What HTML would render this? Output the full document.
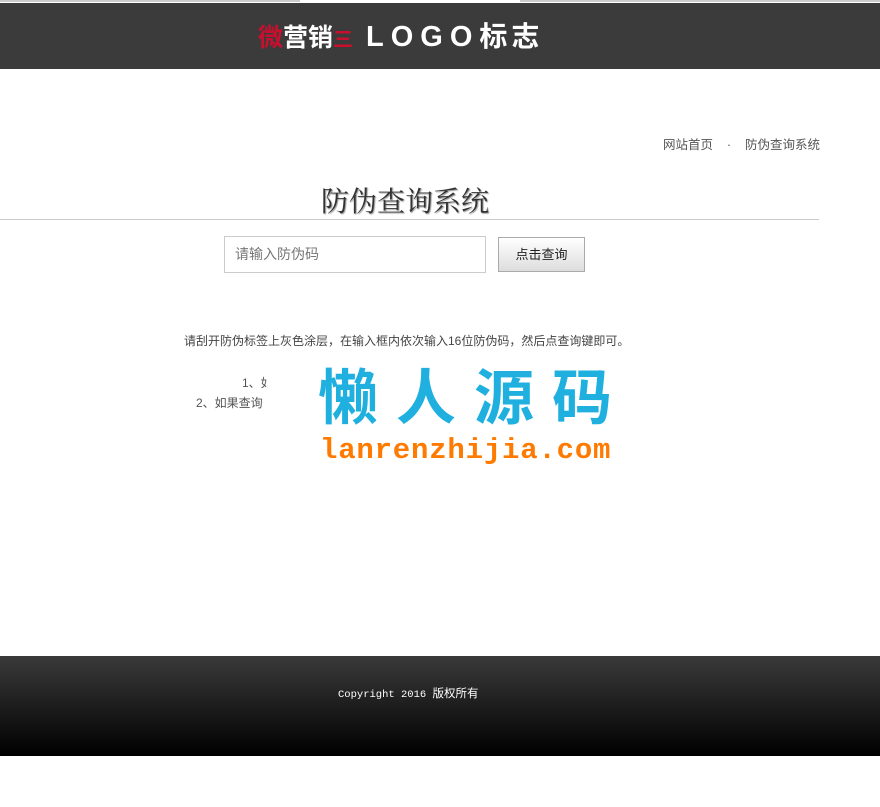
<!DOCTYPE html>
<html><head><meta charset="utf-8"><style>
body{margin:0;width:880px;height:807px;background:#fff;position:relative;font-family:"Liberation Sans","Noto Sans CJK SC",sans-serif;overflow:hidden}
.a{position:absolute;white-space:nowrap}
</style></head><body>
<div class="a" style="left:0;top:0;width:300px;height:2px;background:#ccc"></div>
<div class="a" style="left:520px;top:0;width:360px;height:2px;background:#ccc"></div>
<div class="a" style="left:0;top:3px;width:880px;height:66px;background:#3b3b3b"></div>
<div class="a" style="left:258px;top:20px;font-size:25px;font-weight:bold;color:#fff;line-height:34px"><span style="color:#c8102e">微</span>营销<span style="color:#c8102e;font-size:20px">三</span> <span style="letter-spacing:7px;font-size:29px;margin-left:6px">LOGO</span><span style="font-size:28px;letter-spacing:4px">标志</span></div>
<div class="a" style="left:663px;top:134px;font-size:12.5px;color:#555">网站首页 &nbsp;&nbsp;&nbsp;·&nbsp;&nbsp;&nbsp; 防伪查询系统</div>
<div class="a" style="left:321px;top:180px;font-size:28px;color:#333;font-family:'Noto Serif CJK SC',serif;text-shadow:1px 1px 1px #999">防伪查询系统</div>
<div class="a" style="left:0;top:219px;width:819px;height:1px;background:#ccc"></div>
<div class="a" style="left:224px;top:236px;width:260px;height:35px;border:1px solid #ccc;font-size:14px;color:#777;line-height:35px;text-indent:10px;background:#fff">请输入防伪码</div>
<div class="a" style="left:498px;top:237px;width:85px;height:33px;border:1px solid #aaa;background:linear-gradient(#fff,#ddd);font-size:13px;color:#222;line-height:33px;text-align:center">点击查询</div>
<div class="a" style="left:184px;top:332px;font-size:12px;color:#444">请刮开防伪标签上灰色涂层，在输入框内依次输入16位防伪码，然后点查询键即可。</div>
<div class="a" style="left:242px;top:374px;font-size:12px;color:#555">1、如</div>
<div class="a" style="left:196px;top:394px;font-size:12px;color:#555">2、如果查询</div>
<div class="a" style="left:267px;top:352px;width:398px;height:136px;background:#fff"></div>
<div class="a" style="left:318px;top:362px;font-size:60px;font-weight:bold;color:#1fb0e0;letter-spacing:18px;line-height:74px">懒人源码</div>
<div class="a" style="left:320px;top:434px;font-size:29px;font-weight:bold;color:#ff7a00;font-family:'Liberation Mono',monospace;letter-spacing:0.8px">lanrenzhijia.com</div>
<div class="a" style="left:0;top:656px;width:880px;height:100px;background:linear-gradient(#3a3a3a,#000)"></div>
<div class="a" style="left:338px;top:685px;font-size:10.5px;color:#fff;font-family:'Liberation Mono','Noto Sans CJK SC',monospace">Copyright 2016 <span style="font-size:11.5px;font-family:'Noto Sans CJK SC',sans-serif">版权所有</span></div>
</body></html>
